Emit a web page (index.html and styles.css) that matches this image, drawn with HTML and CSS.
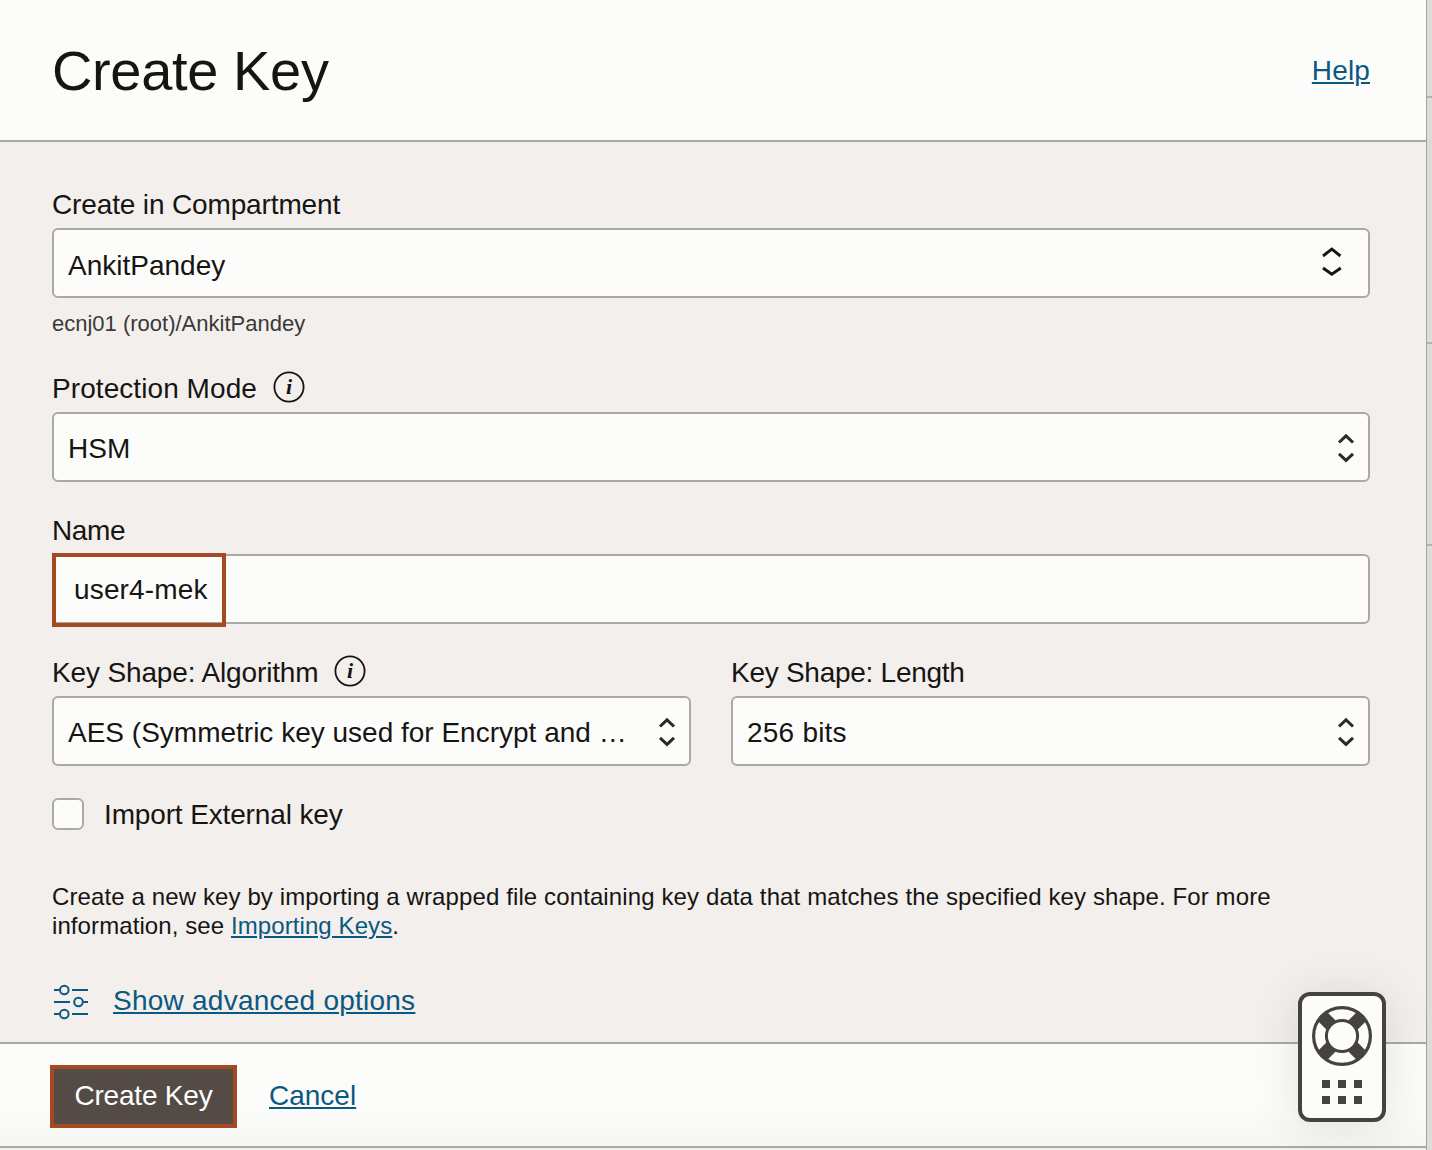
FILE: index.html
```html
<!DOCTYPE html>
<html lang="en">
<head>
<meta charset="utf-8">
<title>Create Key</title>
<link rel="stylesheet" href="styles.css">
</head>
<body>
<div class="screen">
  <section class="panel">
    <header class="header">
      <h1 class="title">Create Key</h1>
      <a class="link help" href="#">Help</a>
    </header>

    <main class="form">
      <div class="field">
        <div class="label"><span class="t-compartment">Create in Compartment</span></div>
        <div class="control control-compartment"><span class="value">AnkitPandey</span>
          <svg class="chevrons-wide" viewBox="0 0 22 30" fill="none"><path d="M2 9 L10.8 2.2 L19.4 9 M2 21 L10.8 27.2 L19.8 21"/></svg>
        </div>
        <div class="hint"><span>ecnj01 (root)/AnkitPandey</span></div>
      </div>

      <div class="field">
        <div class="label"><span class="t-protection">Protection Mode</span>
          <svg class="info" viewBox="0 0 32 32"><circle cx="16" cy="16" r="14.6"/><text x="16" y="22.5">i</text></svg>
        </div>
        <div class="control"><span class="value">HSM</span>
          <svg class="chevrons" viewBox="0 0 20 30" fill="none"><path d="M3 9.5 L10 2.8 L17 9.5 M3 20.8 L10 27.4 L17 20.8"/></svg>
        </div>
      </div>

      <div class="field">
        <div class="label"><span class="t-name">Name</span></div>
        <div class="control control-name"><span class="value t-user">user4-mek</span><span class="mark"></span></div>
      </div>

      <div class="columns">
        <div class="field">
          <div class="label"><span class="t-algorithm">Key Shape: Algorithm</span>
            <svg class="info" viewBox="0 0 32 32"><circle cx="16" cy="16" r="14.6"/><text x="16" y="22.5">i</text></svg>
          </div>
          <div class="control"><span class="value">AES (Symmetric key used for Encrypt and …</span>
            <svg class="chevrons" viewBox="0 0 20 30" fill="none"><path d="M3 9.5 L10 2.8 L17 9.5 M3 20.8 L10 27.4 L17 20.8"/></svg>
          </div>
        </div>
        <div class="field">
          <div class="label"><span class="t-length">Key Shape: Length</span></div>
          <div class="control"><span class="value t-bits">256 bits</span>
            <svg class="chevrons" viewBox="0 0 20 30" fill="none"><path d="M3 9.5 L10 2.8 L17 9.5 M3 20.8 L10 27.4 L17 20.8"/></svg>
          </div>
        </div>
      </div>

      <div class="check-row"><span class="checkbox"></span><span class="t-import">Import External key</span></div>

      <p class="note"><span class="t-note1">Create a new key by importing a wrapped file containing key data that matches the specified key shape. For more</span><br><span class="t-note2">information, see <a class="link" href="#">Importing Keys</a>.</span></p>

      <div class="advanced">
        <svg class="sliders" viewBox="0 0 34 36" fill="none"><path d="M0 6H5.3M18 6H34M0 18H16M29.3 18H34M0 30H5.3M18 30H34"/><circle cx="10.3" cy="6" r="4.3"/><circle cx="24.5" cy="18" r="4.3"/><circle cx="10.3" cy="30" r="4.3"/></svg>
        <a class="link t-advanced" href="#">Show advanced options</a>
      </div>
    </main>

    <footer class="footer">
      <button class="primary"><span class="t-create">Create Key</span></button>
      <a class="link t-cancel" href="#">Cancel</a>
    </footer>
  </section>
  <aside class="backdrop"><i class="rule rule-a"></i><i class="rule rule-b"></i><i class="rule rule-c"></i></aside>

  <div class="support">
    <svg class="buoy" viewBox="0 0 60 60" fill="none"><circle cx="30" cy="30" r="28.4" stroke-width="3.2"/><circle cx="30" cy="30" r="15.6" stroke-width="3"/><path stroke-width="12.8" d="M19.4 19.4 L10.4 10.4 M40.6 19.4 L49.6 10.4 M19.4 40.6 L10.4 49.6 M40.6 40.6 L49.6 49.6"/></svg>
    <div class="dots"><i></i><i></i><i></i><i></i><i></i><i></i></div>
  </div>
</div>
</body>
</html>
```
FILE: styles.css
```css
* { box-sizing: border-box; }
body {
  margin: 0;
  font-family: "Liberation Sans", Arial, sans-serif;
  font-size: 28px;
  line-height: 32px;
  color: #161513;
}
.screen {
  position: relative;
  display: flex;
  width: 1432px;
  height: 1150px;
  overflow: hidden;
  background: #f3efec;
  white-space: nowrap;
}
.panel { flex: 1; display: flex; flex-direction: column; }
.header {
  display: flex;
  justify-content: space-between;
  align-items: flex-start;
  height: 142px;
  padding: 39px 56px 0 52px;
  background: #fcfdfb;
  border-bottom: 2px solid #aea8a2;
}
.title {
  margin: 0;
  font-size: 56px;
  line-height: 64px;
  font-weight: 400;
  letter-spacing: -.36px;
}
.link {
  color: #0b5880;
  text-decoration: underline;
  text-decoration-thickness: 2px;
  text-underline-offset: 2px;
}
.help { margin-top: 16px; letter-spacing: .15px; }
.form {
  display: flex;
  flex-direction: column;
  height: 902px;
  padding: 46px 56px 0 52px;
  border-bottom: 2px solid #aea8a4;
}
.field { margin-bottom: 32px; }
.label { display: flex; height: 40px; padding-top: 1px; }
.info { width: 32px; height: 32px; margin: -2px 0 0 16px; }
.info circle { fill: none; stroke: #161513; stroke-width: 1.8; }
.info text {
  font: italic bold 22px "Liberation Serif", serif;
  text-anchor: middle;
  fill: #161513;
}
.control {
  position: relative;
  display: flex;
  justify-content: space-between;
  height: 70px;
  padding: 19px 12px 0 14px;
  background: #fcfdfb;
  border: 2px solid #aea8a2;
  border-radius: 6px;
}
.control-compartment { padding: 20px 25px 0 14px; }
.control-name { padding: 18px 12px 0 20px; }
.chevrons { width: 20px; height: 30px; stroke: #2b2a28; stroke-width: 3; }
.chevrons-wide { width: 22px; height: 30px; margin-top: -3px; stroke: #161513; stroke-width: 2.9; }
.hint { height: 42px; padding-top: 10px; font-size: 22px; color: #3a3937; }
.mark {
  position: absolute;
  left: -2px;
  top: -3px;
  width: 174px;
  height: 74px;
  border: 4px solid #a34a22;
}
.columns { display: grid; grid-template-columns: 639px 639px; gap: 40px; }
.check-row { display: flex; gap: 20px; height: 84px; }
.checkbox {
  width: 32px;
  height: 32px;
  background: #fcfdfb;
  border: 2px solid #aea8a2;
  border-radius: 6px;
}
.note { margin: 0; height: 102px; font-size: 24px; line-height: 29px; }
.advanced { display: flex; gap: 25px; padding-left: 2px; }
.sliders { width: 34px; height: 36px; stroke: #0b5880; stroke-width: 2; }
.footer {
  display: flex;
  height: 104px;
  padding: 21px 0 0 50px;
  gap: 32px;
  background: linear-gradient(#fcfdfb 60%, #f6f6f4);
  border-bottom: 2px solid #aea8a4;
}
.primary {
  width: 187px;
  height: 63px;
  padding: 0 0 2px;
  font: inherit;
  color: #fff;
  background: #544b47;
  border: 4px solid #a34a22;
}
.backdrop {
  display: flex;
  flex-direction: column;
  width: 6px;
  background: #dcdcdb;
  border-left: 1px solid #a3a3a2;
}
.rule { height: 2px; background: #b5b4b3; }
.rule-a { margin-top: 96px; }
.rule-b { margin-top: 244px; }
.rule-c { margin-top: 200px; }
.support {
  position: absolute;
  left: 1298px;
  top: 992px;
  display: flex;
  flex-direction: column;
  align-items: center;
  width: 88px;
  height: 130px;
  padding-top: 10px;
  background: #fcfdfb;
  border: 4px solid #464240;
  border-radius: 12px;
  box-shadow: 0 4px 48px rgba(40, 44, 44, .13);
}
.buoy { width: 60px; height: 60px; stroke: #464240; }
.dots { display: grid; grid-template-columns: repeat(3, 8px); gap: 8px; margin-top: 14px; }
.dots i { height: 8px; background: #464240; }

/* Per-string tracking */
.t-compartment { letter-spacing: -.14px; }
.t-protection { letter-spacing: .07px; }
.t-name { letter-spacing: -.35px; }
.t-user { letter-spacing: .16px; }
.t-algorithm { letter-spacing: -.14px; }
.t-length { letter-spacing: -.27px; }
.t-bits { letter-spacing: .22px; }
.t-import { margin-top: 1px; letter-spacing: -.14px; }
.t-note1 { letter-spacing: .115px; }
.t-note2 { letter-spacing: .09px; }
.t-advanced { margin-top: 1px; letter-spacing: .24px; }
.t-create { letter-spacing: -.2px; }
.t-cancel { margin-top: 15px; }
```
